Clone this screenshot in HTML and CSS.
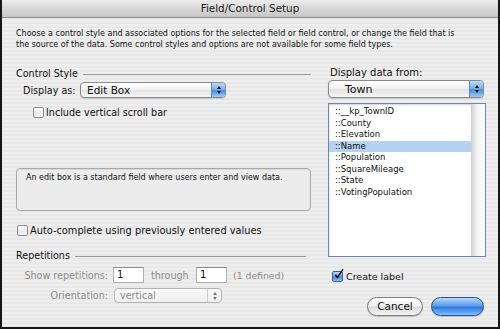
FILE: index.html
```html
<!DOCTYPE html>
<html>
<head>
    <title>Field/Control Setup</title>
    <meta charset="UTF-8">
    <link rel="stylesheet" href="styles.css">
</head>
<body>
<div class="window">
    <div class="titlebar">Field/Control Setup</div>
    <div class="sheet">
        <p class="intro">Choose a control style and associated options for the selected field or field control, or change the field that is<br>the source of the data. Some control styles and options are not available for some field types.</p>
        <div class="columns">
            <div class="col-left">
                <div class="group-title"><span>Control Style</span><i class="rule"></i></div>
                <div class="display-row">
                    <span class="label">Display as:</span>
                    <div class="popup popup--style">
                        <span>Edit Box</span>
                        <span class="stepper"><i class="up"></i><i class="down"></i></span>
                    </div>
                </div>
                <div class="check check--scroll"><span class="box"></span>Include vertical scroll bar</div>
                <div class="info">An edit box is a standard field where users enter and view data.</div>
                <div class="check check--auto"><span class="box"></span>Auto-complete using previously entered values</div>
                <div class="group-title group-title--rep"><span>Repetitions</span><i class="rule"></i></div>
                <div class="rep-row">
                    <span class="label label--rep">Show repetitions:</span>
                    <span class="field">1</span>
                    <span class="through">through</span>
                    <span class="field">1</span>
                    <span class="defined">(1 defined)</span>
                </div>
                <div class="rep-row rep-row--orient">
                    <span class="label label--rep">Orientation:</span>
                    <div class="popup popup--disabled">
                        <span>vertical</span>
                        <span class="stepper"><i class="up"></i><i class="down"></i></span>
                    </div>
                </div>
            </div>
            <div class="col-right">
                <div class="data-title">Display data from:</div>
                <div class="popup popup--town">
                    <span>Town</span>
                    <span class="stepper"><i class="up"></i><i class="down"></i></span>
                </div>
                <div class="list">
                    <ul class="items">
                        <li>::__kp_TownID</li>
                        <li>::County</li>
                        <li>::Elevation</li>
                        <li class="selected">::Name</li>
                        <li>::Population</li>
                        <li>::SquareMileage</li>
                        <li>::State</li>
                        <li>::VotingPopulation</li>
                    </ul>
                    <div class="track"></div>
                </div>
                <div class="check check--label">
                    <span class="box box--on">
                        <svg viewBox="0 0 14 14"><path d="M2 7.5 L5.2 11.5 L12.5 0.5 L11 0 L5.2 8.3 L3.4 6 Z"></path></svg>
                    </span>Create label
                </div>
                <div class="buttons">
                    <div class="btn">Cancel</div>
                    <div class="btn btn--default"></div>
                </div>
            </div>
        </div>
    </div>
</div>
</body>
</html>
```

FILE: styles.css
```css
body {
    margin: 0;
    font-family: "DejaVu Sans", sans-serif;
    font-size: 9.6px;
    color: #111;
}

.window {
    width: 500px;
    height: 329px;
    box-sizing: border-box;
    border: 2px solid #161616;
    border-top: 0;
    background: repeating-linear-gradient(to bottom, #eeeeee 0, #eeeeee 2px, #e8e8e8 2px, #e8e8e8 4px);
    display: flex;
    flex-direction: column;
    overflow: hidden;
}

.titlebar {
    height: 17px;
    line-height: 17px;
    text-align: center;
    font-size: 10.4px;
    color: #1a1a1a;
    background: linear-gradient(to bottom, #ececec, #d8d8d8 50%, #c6c6c6);
    border-bottom: 1px solid #8c8c8c;
}

.sheet {
    padding: 10px 12px 0 14px;
}

.intro {
    margin: 0;
    line-height: 11px;
    font-size: 8px;
}

.columns {
    display: flex;
    gap: 17px;
    margin-top: 17px;
}

.col-left {
    width: 295px;
    display: flex;
    flex-direction: column;
}

.col-right {
    flex: 1;
    display: flex;
    flex-direction: column;
}

.group-title {
    display: flex;
    align-items: center;
    height: 12px;
    gap: 5px;
}

.group-title .rule {
    flex: 1;
    height: 1px;
    margin-top: 3px;
    background: #9a9a9a;
}

.group-title--rep {
    margin-top: 13px;
    padding-right: 5px;
}

.display-row {
    display: flex;
    align-items: center;
    margin-top: 3px;
    padding-left: 7px;
}

.display-row .label {
    width: 57px;
}

.popup {
    display: flex;
    align-items: center;
    height: 16px;
    box-sizing: border-box;
    border: 1px solid #8a8a8a;
    border-radius: 4px;
    background: linear-gradient(to bottom, #ffffff, #f0f0f0 50%, #e2e2e2 51%, #f6f6f6);
    box-shadow: 0 1px 1px rgba(0, 0, 0, .15);
    padding-left: 6px;
}

.popup > span:first-child {
    flex: 1;
}

.popup--style {
    width: 146px;
    font-size: 10.5px;
}

.popup--town {
    margin-top: 1px;
    height: 18px;
    margin-right: 2px;
    padding-left: 16px;
    font-size: 11px;
}

.stepper {
    width: 13px;
    height: 100%;
    display: flex;
    flex-direction: column;
    align-items: center;
    justify-content: center;
    gap: 2px;
    border-radius: 0 3px 3px 0;
    background: linear-gradient(to bottom, #bcd9f7, #7fb2ec 45%, #4b8fe0 55%, #9ccaf8);
    border-left: 1px solid #5b86c0;
}

.stepper i {
    width: 0;
    height: 0;
    border-left: 2px solid transparent;
    border-right: 2px solid transparent;
}

.stepper .up {
    border-bottom: 3px solid #111;
}

.stepper .down {
    border-top: 3px solid #111;
}

.check {
    display: flex;
    align-items: center;
    height: 12px;
    gap: 2px;
}

.box {
    width: 11px;
    height: 11px;
    flex-shrink: 0;
    box-sizing: border-box;
    border: 1px solid #8c8c8c;
    border-radius: 2px;
    background: linear-gradient(to bottom, #ffffff, #e9e9e9 55%, #f8f8f8);
    position: relative;
}

.check--scroll {
    margin-top: 8px;
    padding-left: 17px;
}

.info {
    margin-top: 50px;
    height: 43px;
    box-sizing: border-box;
    border: 1px solid #a8a8a8;
    border-radius: 4px;
    padding: 4px 9px;
    font-size: 8px;
    background: #ececec;
    box-shadow: inset 0 1px 1px rgba(0, 0, 0, .08);
}

.check--auto {
    margin-top: 13px;
    padding-left: 1px;
    font-size: 9.8px;
}

.rep-row {
    display: flex;
    align-items: center;
    color: #8c8c8c;
    margin-top: 6px;
}

.rep-row--orient {
    margin-top: 5px;
}

.label--rep {
    width: 92px;
    padding-right: 5px;
    text-align: right;
}

.field {
    width: 31px;
    height: 16px;
    box-sizing: border-box;
    border: 1px solid #b0b0b0;
    border-top-color: #8c8c8c;
    background: #fff;
    color: #111;
    padding-left: 3px;
    line-height: 14px;
    font-size: 10px;
}

.through {
    width: 52px;
    padding-left: 7px;
    box-sizing: border-box;
}

.defined {
    margin-left: 6px;
    font-size: 9.3px;
}

.popup--disabled {
    width: 108px;
    height: 15px;
    margin-left: 1px;
    padding-left: 5px;
    border-color: #b4b4b4;
    background: linear-gradient(to bottom, #fafafa, #eeeeee);
    box-shadow: none;
}

.popup--disabled .stepper {
    background: transparent;
    border-left: 1px solid #cccccc;
}

.popup--disabled .stepper .up {
    border-bottom-color: #777;
}

.popup--disabled .stepper .down {
    border-top-color: #777;
}

.data-title {
    height: 12px;
    line-height: 12px;
    padding-left: 2px;
    font-size: 10px;
}

.list {
    display: flex;
    margin-top: 5px;
    height: 154px;
    box-sizing: border-box;
    border: 1px solid #6e86b0;
    background: #fff;
    box-shadow: inset 0 1px 2px rgba(0, 0, 0, .2);
}

.items {
    flex: 1;
    list-style: none;
    margin: 0;
    padding: 2px 0 0 0;
    font-size: 8.5px;
}

.items li {
    height: 11.5px;
    line-height: 11.5px;
    padding-left: 6px;
}

.items .selected {
    background: #b5d2f3;
}

.track {
    width: 13px;
    background: linear-gradient(to right, #d8d8d8, #f4f4f4 40%, #ffffff);
    border-left: 1px solid #cfcfcf;
}

.check--label {
    margin-top: 13px;
    padding-left: 4px;
    font-size: 9.5px;
    gap: 3px;
}

.box--on {
    background: linear-gradient(to bottom, #c4dcf6, #5c9ae4 50%, #3f86dc 51%, #8ec2f7);
    border-color: #3d5f93;
}

.box--on svg {
    position: absolute;
    left: 0;
    top: -3px;
    width: 12px;
    height: 12px;
    fill: #111;
}

.buttons {
    display: flex;
    justify-content: flex-end;
    gap: 8px;
    margin-top: 15px;
    margin-right: 2px;
}

.btn {
    width: 56px;
    height: 19px;
    box-sizing: border-box;
    border: 1px solid #7c7c7c;
    border-radius: 10px;
    background: linear-gradient(to bottom, #ffffff, #f0f0f0 45%, #dcdcdc 55%, #f4f4f4);
    text-align: center;
    line-height: 17px;
    font-size: 10.5px;
    box-shadow: 0 1px 1px rgba(0, 0, 0, .2);
}

.btn--default {
    width: 53px;
    border-color: #2a4f8f;
    background: linear-gradient(to bottom, #b8d8fa, #5b9ded 45%, #3178dc 55%, #7cc4ff);
}
```
